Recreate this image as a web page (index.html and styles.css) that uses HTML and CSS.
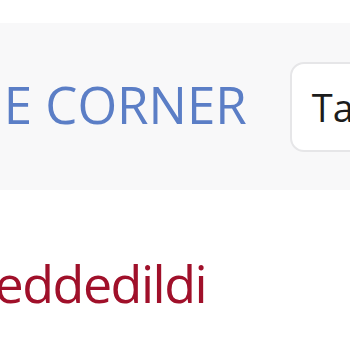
FILE: index.html
```html
<!DOCTYPE html>
<html>
<head>
<meta charset="utf-8">
<link rel="stylesheet" href="styles.css">
</head>
<body>
<div class="top"></div>
<header class="bar">
  <span class="brand">THE CORNER</span>
  <button class="btn">Takip et</button>
</header>
<main class="content">
  <p class="status">Reddedildi</p>
</main>
</body>
</html>
```
FILE: styles.css
```css
html, body {
  margin: 0;
  padding: 0;
  background: #ffffff;
  overflow: hidden;
  width: 350px;
  height: 350px;
  font-family: "Open Sans", "Noto Sans", sans-serif;
}
.top {
  height: 23px;
  background: #ffffff;
}
.bar {
  height: 167px;
  background: #f8f8f9;
  display: flex;
  align-items: center;
  gap: 43px;
  margin-left: -62px;
  white-space: nowrap;
}
.brand {
  font-size: 51px;
  line-height: 1;
  color: #5b7ec6;
  margin-top: -4px;
}
.btn {
  flex: none;
  height: 90px;
  padding: 0 20px;
  border: 2px solid #e6e6e8;
  border-radius: 14px;
  background: #ffffff;
  font-family: inherit;
  font-size: 38px;
  color: #1c1c1c;
  margin-top: 1px;
}
.content {
  padding-top: 67px;
}
.status {
  margin: 0 0 0 -36px;
  font-size: 52px;
  line-height: 1;
  letter-spacing: -1.5px;
  color: #a0102a;
  white-space: nowrap;
}
```
